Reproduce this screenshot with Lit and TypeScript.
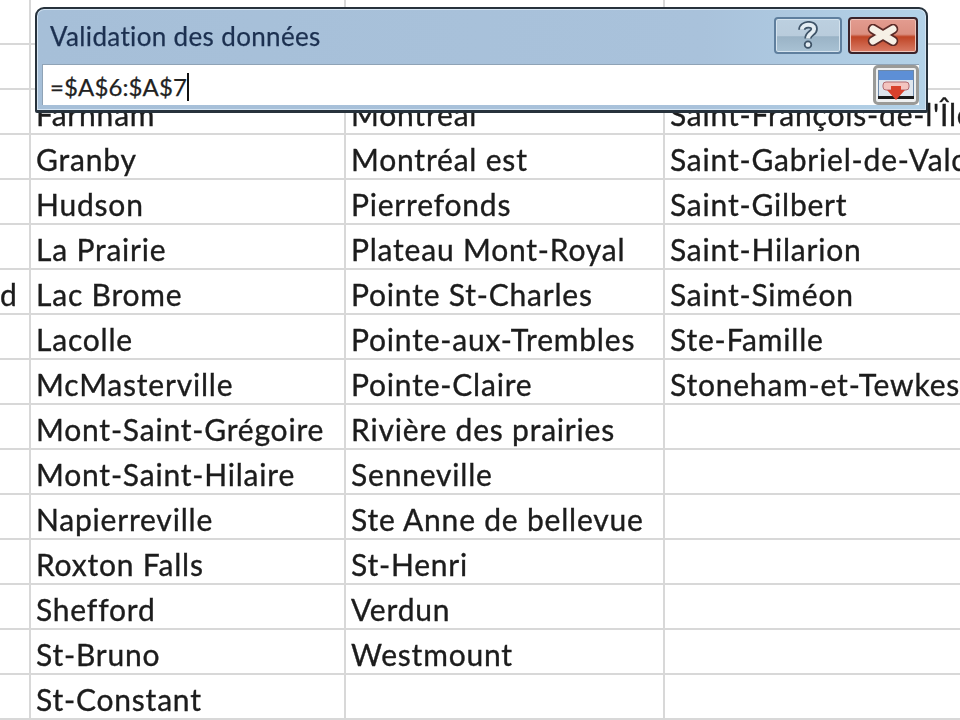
import { LitElement, html, css, svg } from "lit";
import { customElement } from "lit/decorators.js";

const ROWS: [string, string, string, string][] = [
  ["", "", "", ""],
  ["", "", "", ""],
  ["", "Farnham", "Montréal", "Saint-François-de-l'Île"],
  ["", "Granby", "Montréal est", "Saint-Gabriel-de-Valcartier"],
  ["", "Hudson", "Pierrefonds", "Saint-Gilbert"],
  ["", "La Prairie", "Plateau Mont-Royal", "Saint-Hilarion"],
  ["d", "Lac Brome", "Pointe St-Charles", "Saint-Siméon"],
  ["", "Lacolle", "Pointe-aux-Trembles", "Ste-Famille"],
  ["", "McMasterville", "Pointe-Claire", "Stoneham-et-Tewkesbury"],
  ["", "Mont-Saint-Grégoire", "Rivière des prairies", ""],
  ["", "Mont-Saint-Hilaire", "Senneville", ""],
  ["", "Napierreville", "Ste Anne de bellevue", ""],
  ["", "Roxton Falls", "St-Henri", ""],
  ["", "Shefford", "Verdun", ""],
  ["", "St-Bruno", "Westmount", ""],
  ["", "St-Constant", "", ""],
];

@customElement("app-root")
export class AppRoot extends LitElement {
  static styles = css`
    :host {
      display: block;
      position: relative;
      width: 960px;
      height: 720px;
      overflow: hidden;
      background: #fff;
      font-family: "Lato", "Liberation Sans", sans-serif;
    }
    .sheet {
      display: grid;
      grid-template-columns: 31px 315px 319px 340px;
      grid-auto-rows: 45px;
      width: 1005px;
      filter: blur(0.55px);
    }
    .cell {
      box-sizing: border-box;
      border-right: 2px solid #d8d8d8;
      border-bottom: 2px solid #d8d8d8;
      padding: 3px 0 0 5px;
      font-size: 30px;
      letter-spacing: 0.8px;
      line-height: 43px;
      color: #1c1c1c;
      -webkit-text-stroke: 0.35px #1c1c1c;
      white-space: nowrap;
      min-width: 0;
    }
    .cell.first { padding-left: 0; }
    .dialog {
      position: absolute;
      left: 35px;
      top: 7px;
      width: 893px;
      height: 106px;
      box-sizing: border-box;
      border: 2px solid #27323c;
      border-bottom-width: 3px;
      border-radius: 9px 9px 2px 2px;
      background: linear-gradient(90deg, #a6bfd8 0%, #a9c2db 75%, #b3d2e8 100%);
      box-shadow: inset 0 0 0 1px #d4e4f2;
      display: flex;
      flex-direction: column;
      padding: 0 7px 5px 5px;
      filter: blur(0.5px);
    }
    .title {
      flex: none;
      height: 55px;
      display: flex;
      align-items: center;
      justify-content: space-between;
    }
    .title-text {
      font-size: 26px;
      padding: 0 0 0 8px;
      margin-top: -2px;
      color: #1c3050;
      letter-spacing: 0.35px;
      -webkit-text-stroke: 0.25px #1c3050;
    }
    .btns { display: flex; gap: 6px; padding-right: 1px; margin-top: -3px; }
    .btn {
      width: 68px;
      height: 37px;
      box-sizing: border-box;
      border-radius: 4px;
      display: flex;
      align-items: center;
      justify-content: center;
    }
    .help {
      border: 2px solid #5f7f9e;
      background: linear-gradient(#bcd0e0 0%, #b9ccdc 50%, #9ab3c6 54%, #a9c2d4 100%);
      box-shadow: inset 0 0 0 1px #d5e3ee;
    }
    .close {
      border: 2px solid #3a2229;
      width: 70px;
      background: linear-gradient(#e39c90 0%, #db8f80 46%, #bf4526 54%, #d97c66 100%);
      box-shadow: inset 0 0 0 1px #eec4ba;
    }
    .input-row {
      flex: 1;
      background: #fff;
      border-top: 1px solid #8fa3b6;
      border-left: 1px solid #8fa3b6;
      display: flex;
      align-items: center;
      justify-content: space-between;
      padding: 0 0 0 7px;
      min-height: 0;
    }
    .formula {
      font-size: 24px;
      color: #222;
      letter-spacing: 0.1px;
      -webkit-text-stroke: 0.25px #222;
      border-right: 2px solid #111;
      line-height: 28px;
      margin-top: 4px;
    }
    .picker {
      width: 46px;
      height: 40px;
      box-sizing: border-box;
      border: 3px solid #9a9a97;
      border-radius: 5px;
      background: #eef0f1;
      display: flex;
      align-items: center;
      justify-content: center;
    }
  `;

  private helpIcon() {
    return svg`<svg width="22" height="28" viewBox="0 0 24 32">
      <path d="M5 10 C5 3 19 2 19 9 C19 14 12 14 12 20" fill="none" stroke="#3f5468" stroke-width="8.5"/>
      <path d="M5 10 C5 3 19 2 19 9 C19 14 12 14 12 20" fill="none" stroke="#e4edf3" stroke-width="4.5"/>
      <circle cx="12" cy="27" r="3.8" fill="#e4edf3" stroke="#3f5468" stroke-width="2"/>
    </svg>`;
  }
  private closeIcon() {
    return svg`<svg width="34" height="22" viewBox="0 0 34 22">
      <path d="M7 5 L27 17 M27 5 L7 17" stroke="#5b2a26" stroke-width="10.5" stroke-linecap="round"/>
      <path d="M7 5 L27 17 M27 5 L7 17" stroke="#f6f0e6" stroke-width="7" stroke-linecap="round"/>
    </svg>`;
  }
  private pickerIcon() {
    return svg`<svg width="36" height="30" viewBox="0 0 36 30">
      <rect x="0.5" y="0.5" width="35" height="28" fill="#dfe6ee" stroke="#6d88a8"/>
      <rect x="1" y="1" width="34" height="9" fill="#5d8fd6"/>
      <rect x="5" y="12" width="26" height="8" rx="3" fill="#f3c4bf" stroke="#b06a70"/>
      <rect x="0" y="26" width="36" height="3" fill="#1b1b1b"/>
      <path d="M13 16 H23 V20 H27 L18 30 L9 20 H13 Z" fill="#d8412c"/>
    </svg>`;
  }

  render() {
    return html`
      <div class="sheet">
        ${ROWS.map((r) =>
          r.map(
            (c, i) => html`<div class="cell ${i === 0 ? "first" : ""}">${c}</div>`
          )
        )}
      </div>
      <div class="dialog">
        <div class="title">
          <span class="title-text">Validation des données</span>
          <div class="btns">
            <div class="btn help">${this.helpIcon()}</div>
            <div class="btn close">${this.closeIcon()}</div>
          </div>
        </div>
        <div class="input-row">
          <span class="formula">=$A$6:$A$7</span>
          <div class="picker">${this.pickerIcon()}</div>
        </div>
      </div>
    `;
  }
}
